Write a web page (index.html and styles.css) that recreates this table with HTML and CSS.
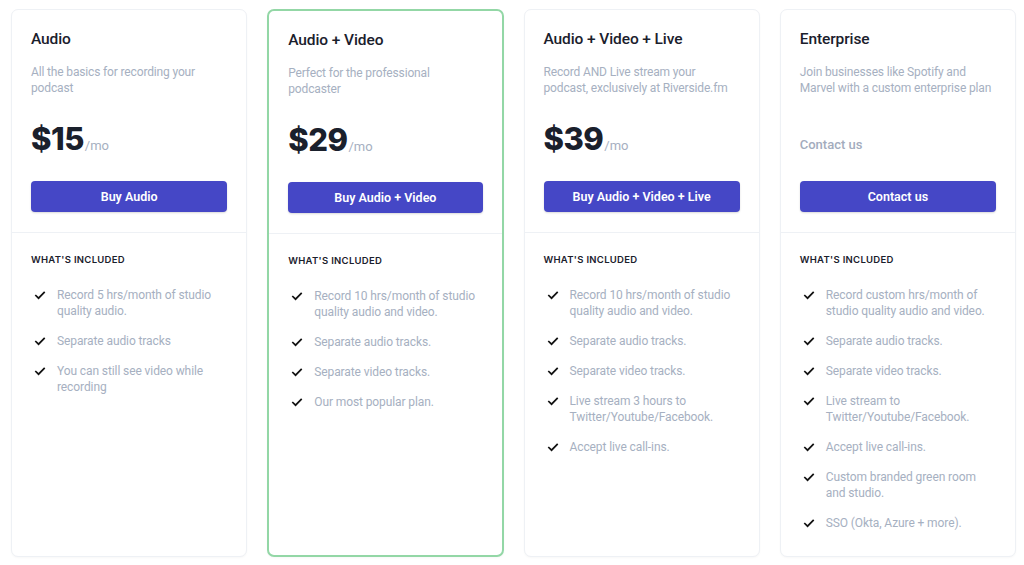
FILE: index.html
```html
<!DOCTYPE html>
<html lang="en">
<head>
<meta charset="utf-8">
<title>Pricing</title>
<link rel="stylesheet" href="styles.css">
</head>
<body>
<div class="plans">
  <div class="card">
    <div class="head">
      <h2 class="title">Audio</h2>
      <p class="desc">All the basics for recording your podcast</p>
      <div class="price"><span class="amount">$15</span><span class="per">/mo</span></div>
      <a class="btn">Buy Audio</a>
    </div>
    <div class="body">
      <h3 class="inc">What's included</h3>
      <ul class="features">
        <li><svg class="chk" viewBox="0 0 14 11"><path d="M1.5 5.5l3.8 3.7L12.5 1.8"/></svg><span>Record 5 hrs/month of studio quality audio.</span></li>
        <li><svg class="chk" viewBox="0 0 14 11"><path d="M1.5 5.5l3.8 3.7L12.5 1.8"/></svg><span>Separate audio tracks</span></li>
        <li><svg class="chk" viewBox="0 0 14 11"><path d="M1.5 5.5l3.8 3.7L12.5 1.8"/></svg><span>You can still see video while recording</span></li>
      </ul>
    </div>
  </div>
  <div class="card featured">
    <div class="head">
      <h2 class="title">Audio + Video</h2>
      <p class="desc">Perfect for the professional podcaster</p>
      <div class="price"><span class="amount">$29</span><span class="per">/mo</span></div>
      <a class="btn">Buy Audio + Video</a>
    </div>
    <div class="body">
      <h3 class="inc">What's included</h3>
      <ul class="features">
        <li><svg class="chk" viewBox="0 0 14 11"><path d="M1.5 5.5l3.8 3.7L12.5 1.8"/></svg><span>Record 10 hrs/month of studio quality audio and video.</span></li>
        <li><svg class="chk" viewBox="0 0 14 11"><path d="M1.5 5.5l3.8 3.7L12.5 1.8"/></svg><span>Separate audio tracks.</span></li>
        <li><svg class="chk" viewBox="0 0 14 11"><path d="M1.5 5.5l3.8 3.7L12.5 1.8"/></svg><span>Separate video tracks.</span></li>
        <li><svg class="chk" viewBox="0 0 14 11"><path d="M1.5 5.5l3.8 3.7L12.5 1.8"/></svg><span>Our most popular plan.</span></li>
      </ul>
    </div>
  </div>
  <div class="card">
    <div class="head">
      <h2 class="title">Audio + Video + Live</h2>
      <p class="desc">Record AND Live stream your podcast, exclusively at Riverside.fm</p>
      <div class="price"><span class="amount">$39</span><span class="per">/mo</span></div>
      <a class="btn">Buy Audio + Video + Live</a>
    </div>
    <div class="body">
      <h3 class="inc">What's included</h3>
      <ul class="features">
        <li><svg class="chk" viewBox="0 0 14 11"><path d="M1.5 5.5l3.8 3.7L12.5 1.8"/></svg><span>Record 10 hrs/month of studio quality audio and video.</span></li>
        <li><svg class="chk" viewBox="0 0 14 11"><path d="M1.5 5.5l3.8 3.7L12.5 1.8"/></svg><span>Separate audio tracks.</span></li>
        <li><svg class="chk" viewBox="0 0 14 11"><path d="M1.5 5.5l3.8 3.7L12.5 1.8"/></svg><span>Separate video tracks.</span></li>
        <li><svg class="chk" viewBox="0 0 14 11"><path d="M1.5 5.5l3.8 3.7L12.5 1.8"/></svg><span>Live stream 3 hours to Twitter/Youtube/Facebook.</span></li>
        <li><svg class="chk" viewBox="0 0 14 11"><path d="M1.5 5.5l3.8 3.7L12.5 1.8"/></svg><span>Accept live call-ins.</span></li>
      </ul>
    </div>
  </div>
  <div class="card">
    <div class="head">
      <h2 class="title">Enterprise</h2>
      <p class="desc">Join businesses like Spotify and Marvel with a custom enterprise plan</p>
      <div class="price"><span class="contact">Contact us</span></div>
      <a class="btn">Contact us</a>
    </div>
    <div class="body">
      <h3 class="inc">What's included</h3>
      <ul class="features">
        <li><svg class="chk" viewBox="0 0 14 11"><path d="M1.5 5.5l3.8 3.7L12.5 1.8"/></svg><span>Record custom hrs/month of studio quality audio and video.</span></li>
        <li><svg class="chk" viewBox="0 0 14 11"><path d="M1.5 5.5l3.8 3.7L12.5 1.8"/></svg><span>Separate audio tracks.</span></li>
        <li><svg class="chk" viewBox="0 0 14 11"><path d="M1.5 5.5l3.8 3.7L12.5 1.8"/></svg><span>Separate video tracks.</span></li>
        <li><svg class="chk" viewBox="0 0 14 11"><path d="M1.5 5.5l3.8 3.7L12.5 1.8"/></svg><span>Live stream to Twitter/Youtube/Facebook.</span></li>
        <li><svg class="chk" viewBox="0 0 14 11"><path d="M1.5 5.5l3.8 3.7L12.5 1.8"/></svg><span>Accept live call-ins.</span></li>
        <li><svg class="chk" viewBox="0 0 14 11"><path d="M1.5 5.5l3.8 3.7L12.5 1.8"/></svg><span>Custom branded green room and studio.</span></li>
        <li><svg class="chk" viewBox="0 0 14 11"><path d="M1.5 5.5l3.8 3.7L12.5 1.8"/></svg><span>SSO (Okta, Azure + more).</span></li>
      </ul>
    </div>
  </div>
</div>
</body>
</html>
```

FILE: styles.css
```css
* { box-sizing: border-box; }
html, body { margin: 0; padding: 0; background: #fff; }
body {
  font-family: Roboto, "Liberation Sans", sans-serif;
  color: #1a202c;
  -webkit-font-smoothing: antialiased;
}
.plans {
  display: grid;
  grid-template-columns: repeat(4, 1fr);
  grid-template-rows: 100%;
  gap: 20px;
  padding: 9px 8px 8px 11px;
  height: 565px;
}
.card {
  border: 1px solid #eef1f5;
  border-radius: 7px;
  box-shadow: 0 1px 2px rgba(0,0,0,0.03);
  background: #fff;
  display: flex;
  flex-direction: column;
  overflow: hidden;
}
.card.featured {
  border: 2px solid #93d7a6;
}
.head {
  padding: 20px 19px 20px 19px;
  border-bottom: 1px solid #eef1f5;
}
.title {
  margin: 0;
  font-size: 15.5px;
  line-height: 18px;
  font-weight: 500;
  color: #1a202c;
  letter-spacing: -0.1px;
}
.desc {
  margin: 16px 0 0;
  font-size: 12px;
  line-height: 16px;
  color: #a6b0c1;
  height: 32px;
  letter-spacing: -0.15px;
}
.price {
  margin-top: 23px;
  height: 40px;
  line-height: 40px;
  font-size: 32px;
  white-space: nowrap;
}
.amount {
  font-family: Inter, Roboto, sans-serif;
  font-size: 31px;
  font-weight: 800;
  color: #1a202c;
  letter-spacing: -0.5px;
}
.per {
  font-size: 13px;
  color: #a6b0c1;
  margin-left: 1px;
}
.contact {
  font-size: 13px;
  font-weight: 500;
  color: #a3acbd;
  position: relative;
  top: -1px;
}
.btn {
  display: flex;
  align-items: center;
  justify-content: center;
  margin-top: 22px;
  height: 31px;
  border-radius: 4px;
  background: #4547c6;
  color: #fff;
  font-size: 12.5px;
  font-weight: 600;
  box-shadow: 0 1px 2px rgba(0,0,0,0.15);
}
.body {
  padding: 19px 19px 20px;
}
.inc {
  margin: 0;
  font-family: Inter, Roboto, sans-serif;
  font-size: 9.5px;
  line-height: 16px;
  font-weight: 600;
  letter-spacing: 0.3px;
  text-transform: uppercase;
  color: #1a202c;
}
.features {
  list-style: none;
  margin: 19px 0 0;
  padding: 0;
  display: flex;
  flex-direction: column;
  gap: 14px;
}
.features li {
  display: flex;
  align-items: flex-start;
  font-size: 12px;
  line-height: 16px;
  color: #a6b0c1;
  letter-spacing: -0.1px;
}
.chk {
  flex: none;
  width: 12px;
  height: 10px;
  margin: 3px 11px 0 3px;
  fill: none;
  stroke: #111;
  stroke-width: 2;
}
```
